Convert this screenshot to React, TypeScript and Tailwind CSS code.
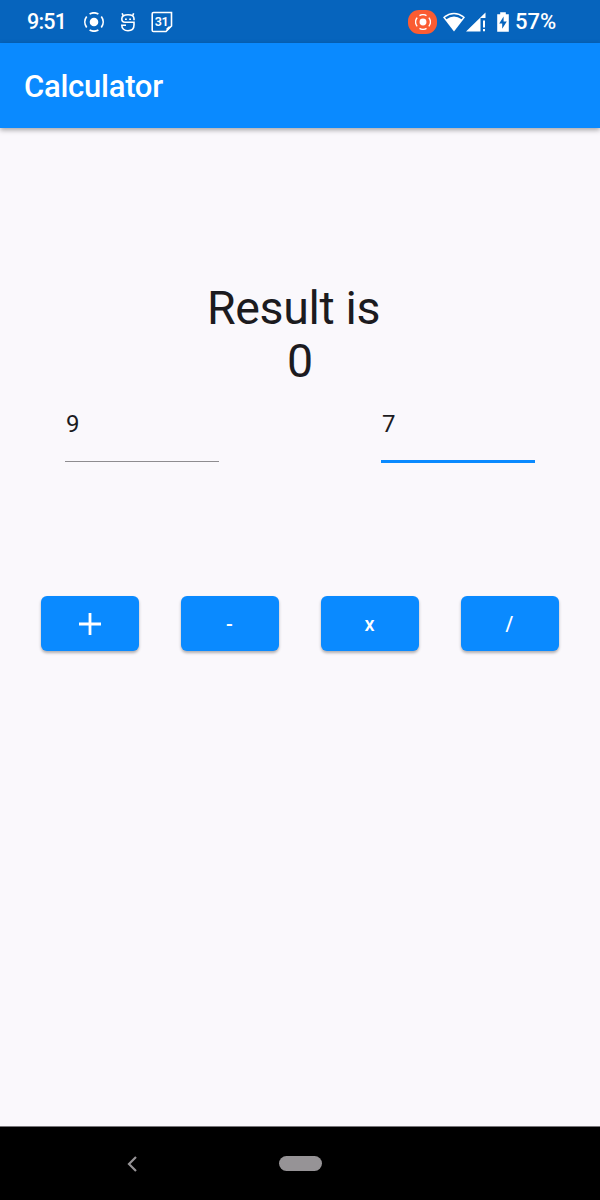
import React from "react";

function CastIcon({ className }: { className: string }) {
  return (
    <svg viewBox="0 0 20 20" className={className} fill="none" stroke="white" strokeWidth="1.7">
      <circle cx="10" cy="10" r="4.3" fill="white" stroke="none" />
      <path d="M5.6 2A9.1 9.1 0 0 1 14.4 2M17.3 4.5A9.1 9.1 0 0 1 17.3 15.5M14.4 18A9.1 9.1 0 0 1 5.6 18M2.7 15.5A9.1 9.1 0 0 1 2.7 4.5" />
    </svg>
  );
}

function StatusBar() {
  return (
    <header className="flex h-[43px] shrink-0 items-center bg-[#0664bd] pl-[27px] pr-[43px] text-white">
      <span className="w-[39px] whitespace-nowrap pt-px text-[21.5px] font-medium leading-[42px] tracking-[-0.8px]">9:51</span>
      <CastIcon className="ml-[18px] h-5 w-5" />
      <svg viewBox="0 0 16 20" className="ml-[16px] h-5 w-4" fill="none" stroke="white" strokeWidth="1.6">
        <path d="M14 8.3V6.8C14 4 11.8 2.7 8 2.7S1.8 4 1.8 6.8C1.8 9 3 10.3 5 10.3H14V13C14 16.7 11.8 18.7 8 18.7S1.8 16.7 1.8 13.2H6M3.2 4.2L2.2 1.2M12.6 4.2L13.6 1.2" />
        <path d="M5 7.2h1.8M9.2 7.2H11" />
      </svg>
      <svg viewBox="0 0 22 22" className="ml-[15px] h-[22px] w-[22px]">
        <path d="M2.5 1.5H20.5V15L15 20.5H2.5Q1.2 20.5 1.2 19.2V2.8Q1.2 1.5 2.5 1.5Z" fill="none" stroke="white" strokeWidth="1.6" />
        <path d="M15.5 20.5V17.5L17.5 15.5H20.5Z" fill="white" />
        <text x="10.6" y="15.2" textAnchor="middle" fill="white" fontSize="12.5" fontWeight="600" letterSpacing="-0.3" className="font-['Roboto',sans-serif]">31</text>
      </svg>
      <div className="ml-auto flex h-6 w-[29px] items-center justify-center rounded-[11px] bg-[#fb5c32]">
        <CastIcon className="h-4 w-4" />
      </div>
      <svg viewBox="0 0 24 20" className="ml-[5px] h-5 w-6">
        <path d="M1 5.2Q12 -3.7 23 5.2L12 19.5Z" fill="white" />
        <path d="M3 5.5Q12 -1 21 5.5L19.6 7.3Q12 1.8 4.4 7.3Z" fill="#0664bd" />
      </svg>
      <svg viewBox="0 0 22 20" className="h-5 w-[22px]">
        <path d="M0 19.5L19.5 0.5V6H14.5V19.5Z" fill="white" />
        <path d="M17 8.5H19V15.5H17ZM17 17H19V19.3H17Z" fill="white" />
      </svg>
      <svg viewBox="0 0 14 22" className="ml-[8px] h-[22px] w-[14px]">
        <path d="M4.2 1.2H9.8V3.2H12.8V20.8H1.2V3.2H4.2Z" fill="white" />
        <path d="M7.6 5.5L3.2 12.5H6.2V17.8L10.8 10.6H7.6Z" fill="#0664bd" />
      </svg>
      <span className="ml-[5px] w-[42px] whitespace-nowrap pt-px text-[22px] font-medium leading-[42px]">57%</span>
    </header>
  );
}

function NumberField({ value, focused = false }: { value: string; focused?: boolean }) {
  return (
    <div className="flex h-[54px] w-[154px] flex-col justify-between">
      <span className="pl-px text-[24px] leading-[31px] text-[#1c1b1f]">{value}</span>
      <div className={focused ? "h-[3px] bg-[#0a8aff]" : "mb-px h-[1.5px] bg-[#8e8c90]"} />
    </div>
  );
}

function OperatorButton({ children }: { children: React.ReactNode }) {
  return (
    <button className="flex h-[55px] w-[98px] items-center justify-center rounded-[6px] bg-[#0a8aff] pr-px pt-px text-[20px] font-medium text-white shadow-[0_2px_3px_rgba(0,0,0,0.3)]">
      {children}
    </button>
  );
}

export default function App() {
  return (
    <div className="flex h-[1200px] w-[600px] flex-col overflow-hidden bg-[#faf8fc] font-['Roboto',sans-serif]">
      <StatusBar />
      <div className="z-10 flex h-[85px] shrink-0 items-center bg-[#0a8aff] pl-6 shadow-[0_2px_5px_rgba(0,0,0,0.35)]">
        <h1 className="pt-[2px] text-[31px] font-medium leading-10 tracking-[-0.25px] text-white">Calculator</h1>
      </div>
      <main className="flex flex-1 flex-col pt-[153px]">
        <div className="text-[46.5px] leading-[54px] text-[#1c1b1f]">
          <p className="pr-[13px] text-center tracking-[-0.35px]">Result is</p>
          <p className="-mt-px text-center">0</p>
        </div>
        <div className="mt-[21px] flex justify-between pl-[65px] pr-[65px]">
          <NumberField value="9" />
          <NumberField value="7" focused />
        </div>
        <div className="mt-[133px] flex justify-between px-[41px]">
          <OperatorButton>
            <svg viewBox="0 0 22 22" className="h-[22px] w-[22px]">
              <path d="M0 11H22M11 0V22" stroke="white" strokeWidth="2.8" />
            </svg>
          </OperatorButton>
          <OperatorButton>-</OperatorButton>
          <OperatorButton>x</OperatorButton>
          <OperatorButton>/</OperatorButton>
        </div>
      </main>
      <nav className="flex h-[74px] shrink-0 items-center border-t border-[#777579] bg-black pl-[127px]">
        <svg viewBox="0 0 10 16" className="h-4 w-[10px]" fill="none" stroke="#969396" strokeWidth="2.2">
          <path d="M9 1L2 8L9 15" />
        </svg>
        <div className="ml-[142px] h-[15px] w-[43px] rounded-full bg-[#969396]" />
      </nav>
    </div>
  );
}
